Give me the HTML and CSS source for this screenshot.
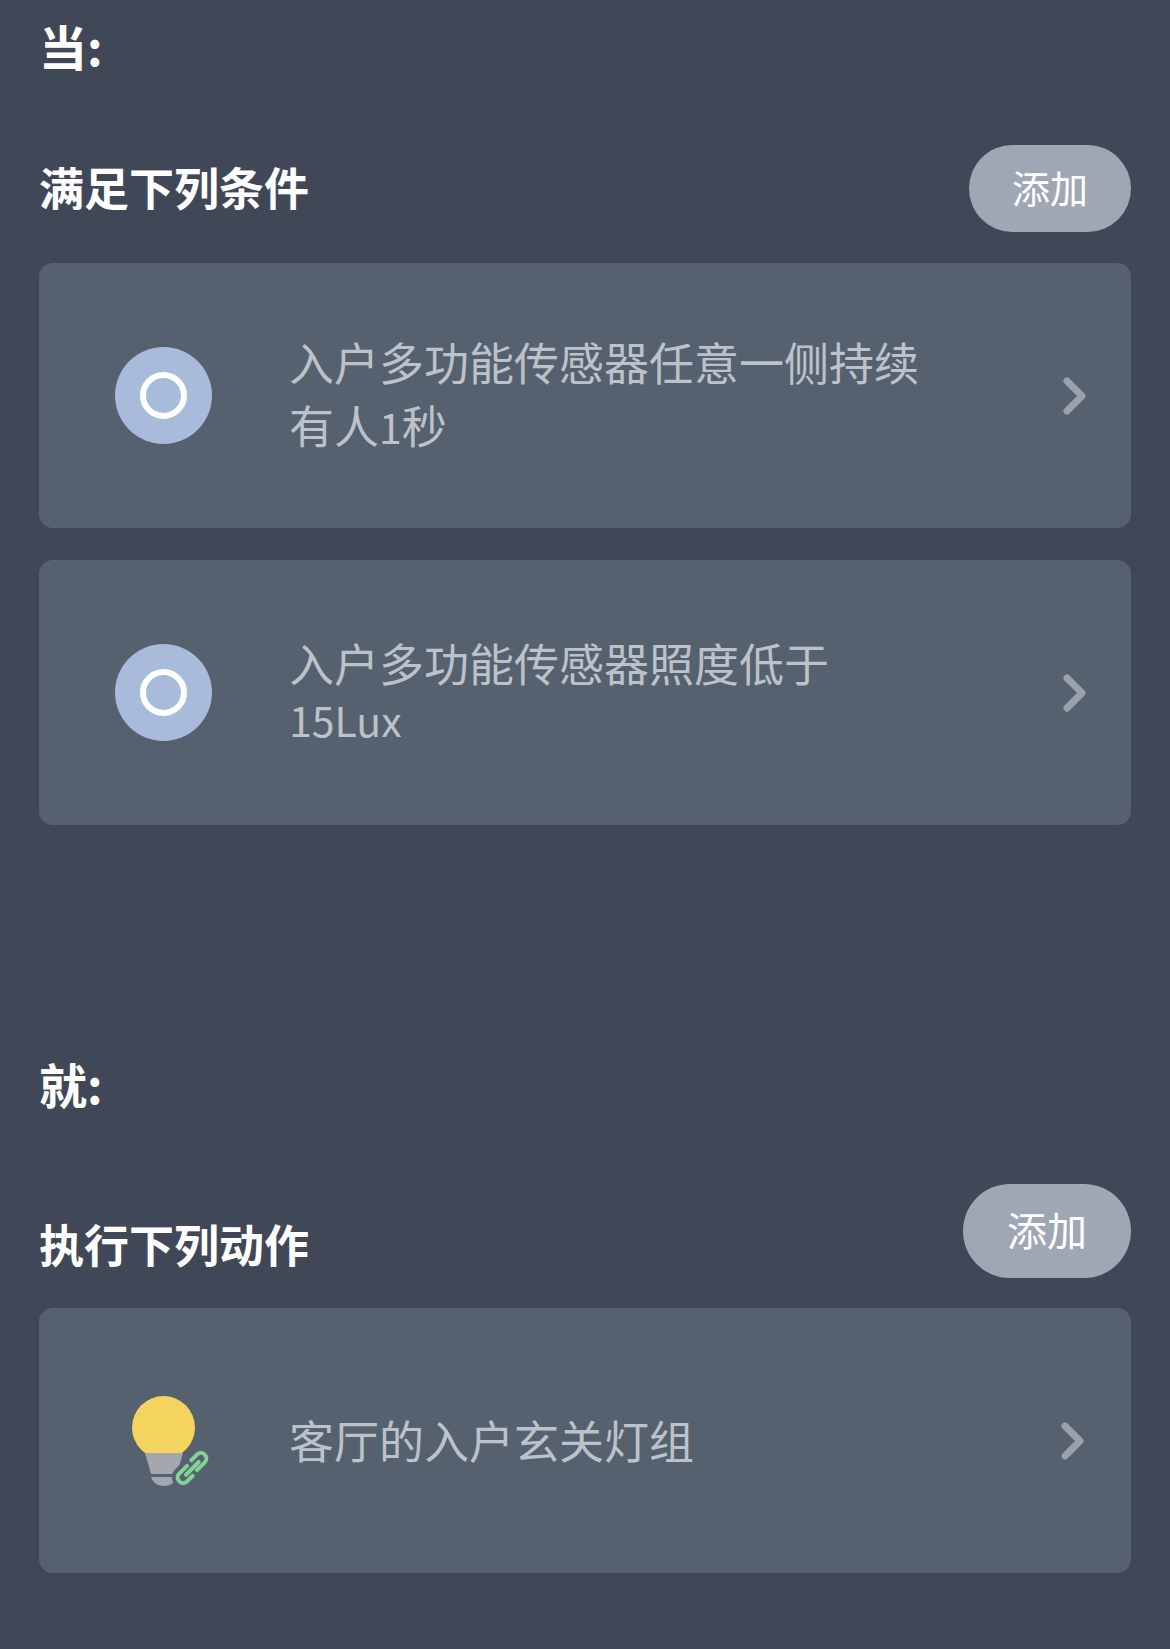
FILE: index.html
```html
<!DOCTYPE html>
<html lang="zh-CN">
<head>
    <meta charset="UTF-8">
    <meta name="viewport" content="width=device-width, initial-scale=1.0">
    <title>自动化</title>
    <link rel="stylesheet" href="styles.css">
</head>
<body>
    <div class="container">
        <h2 class="section-title">当:</h2>
        <div class="list-head">
            <h3>满足下列条件</h3>
            <button type="button" class="add-btn">添加</button>
        </div>
        <div class="card">
            <div class="icon-slot">
                <div class="sensor-icon"><div class="sensor-ring"></div></div>
            </div>
            <div class="card-text">
                <div class="line">入户多功能传感器任意一侧持续</div>
                <div class="line">有人<span class="num">1</span>秒</div>
            </div>
            <svg class="chevron" viewBox="0 0 24 38"><path d="M4 4 L19 19 L4 34"/></svg>
        </div>
        <div class="card">
            <div class="icon-slot">
                <div class="sensor-icon"><div class="sensor-ring"></div></div>
            </div>
            <div class="card-text">
                <div class="line tight">入户多功能传感器照度低于</div>
                <div class="line tight small">15Lux</div>
            </div>
            <svg class="chevron" viewBox="0 0 24 38"><path d="M4 4 L19 19 L4 34"/></svg>
        </div>

        <h2 class="section-title second">就:</h2>
        <div class="list-head action-head">
            <h3>执行下列动作</h3>
            <button type="button" class="add-btn large">添加</button>
        </div>
        <div class="card action-card">
            <div class="icon-slot">
                <svg class="bulb" viewBox="0 0 97 97">
                    <circle cx="48.5" cy="35.5" r="31.5" fill="#f4d35e"/>
                    <path d="M30 61 H68 L62 82 H36 Z" fill="#a3a6ad"/>
                    <path d="M36 85 H62 C60 91 55 94 49 94 C43 94 38 91 36 85 Z" fill="#a3a6ad"/>
                    <g fill="none" stroke-linecap="round" transform="rotate(-45 77 76)">
                        <rect x="56" y="68" width="43" height="16" rx="8" fill="#56616f" stroke="#56616f" stroke-width="6"/>
                        <path d="M75 71 H64 A5.5 5.5 0 0 0 64 82 H72" stroke="#82d495" stroke-width="4"/>
                        <path d="M79 81 H90 A5.5 5.5 0 0 0 90 70 H82" stroke="#82d495" stroke-width="4"/>
                        <path d="M68 76.500 H86" stroke="#82d495" stroke-width="4"/>
                    </g>
                </svg>
            </div>
            <div class="card-text">
                <div class="line">客厅的入户玄关灯组</div>
            </div>
            <svg class="chevron" viewBox="0 0 24 38"><path d="M4 4 L19 19 L4 34"/></svg>
        </div>
    </div>
</body>
</html>
```

FILE: styles.css
```css
html, body {
    margin: 0;
    height: 100%;
}
body {
    font-family: "Noto Sans CJK SC", "Noto Sans", sans-serif;
    background-color: #404757;
    overflow: hidden;
}
.container {
    padding: 0 39px;
}
.section-title {
    margin: 0;
    height: 98px;
    line-height: 90px;
    font-size: 48px;
    font-weight: 700;
    color: #fff;
}
.section-title.second {
    margin-top: 213px;
    height: 98px;
    line-height: 90px;
}
.list-head {
    display: flex;
    justify-content: space-between;
    align-items: center;
    margin-top: 47px;
    margin-bottom: 31px;
}
.action-head {
    margin-top: 48px;
    margin-bottom: 30px;
    align-items: flex-start;
}
.list-head h3 {
    margin: 0;
    font-size: 45px;
    font-weight: 700;
    color: #fff;
    line-height: 84px;
    height: 87px;
}
.action-head h3 {
    margin-top: 16px;
    line-height: 88px;
    height: 78px;
}
.add-btn {
    width: 162px;
    height: 87px;
    padding: 0 0 4px;
    border: none;
    border-radius: 44px;
    background-color: #9fa7b4;
    color: #fff;
    font-family: inherit;
    font-size: 38px;
}
.add-btn.large {
    width: 168px;
    height: 94px;
    border-radius: 47px;
    font-size: 40px;
}
.card {
    display: flex;
    align-items: center;
    height: 265px;
    margin-bottom: 32px;
    padding: 0 44px 0 76px;
    border-radius: 14px;
    background-color: #56616f;
}
.action-card {
    padding-right: 46px;
}
.icon-slot {
    flex: none;
    width: 97px;
    height: 97px;
}
.sensor-icon {
    display: flex;
    align-items: center;
    justify-content: center;
    width: 97px;
    height: 97px;
    border-radius: 50%;
    background-color: #a9bbdb;
}
.sensor-ring {
    width: 35px;
    height: 35px;
    border: 6px solid #fff;
    border-radius: 50%;
}
.bulb {
    display: block;
    width: 97px;
    height: 97px;
}
.card-text {
    flex: 1;
    margin-left: 77px;
    padding-bottom: 3px;
    color: #bcc2ca;
    font-size: 45px;
}
.line {
    line-height: 63px;
    white-space: nowrap;
}
.line.tight {
    line-height: 56px;
}
.line.small {
    font-size: 41px;
}
.num {
    font-size: 41px;
}
.chevron {
    flex: none;
    width: 24px;
    height: 38px;
    fill: none;
    stroke: #9aa1ad;
    stroke-width: 7;
    stroke-linecap: round;
    stroke-linejoin: round;
}
```
